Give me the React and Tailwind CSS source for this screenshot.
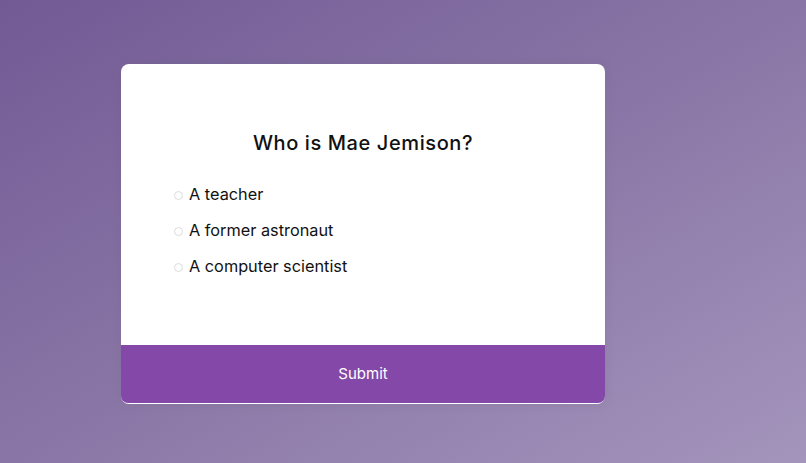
export default function App() {
  const options = ["A teacher", "A former astronaut", "A computer scientist"];
  return (
    <div
      className="w-[806px] h-[463px] overflow-hidden bg-gradient-to-br from-[#725a95] via-[#8a76a6] to-[#a495bc] pt-[64px] pl-[121px]"
      style={{ fontFamily: "Inter, 'Noto Sans', sans-serif" }}
    >
      <div className="w-[484px] bg-white rounded-[8px] pb-px shadow-[0_0_10px_rgba(100,100,111,0.2)]">
        <div className="pt-[51px] pb-[67px] px-[53px]">
          <h2 className="text-center text-[20px] font-medium text-[#111] leading-[30px] py-[13px] tracking-[0.6px]">
            Who is Mae Jemison?
          </h2>
          <ul className="mt-[12px] flex flex-col gap-[13px]">
            {options.map((o) => (
              <li key={o} className="flex items-center text-[16.3px] leading-[23px] text-[#111]">
                <span className="w-[9px] h-[9px] rounded-full border border-[#dcdcdc] mt-[2px] mr-[6px] shrink-0" />
                <span>{o}</span>
              </li>
            ))}
          </ul>
        </div>
        <button className="w-full h-[58px] bg-[#8448a8] text-white text-[15px] rounded-b-[7px] flex items-center justify-center">
          Submit
        </button>
      </div>
    </div>
  );
}
